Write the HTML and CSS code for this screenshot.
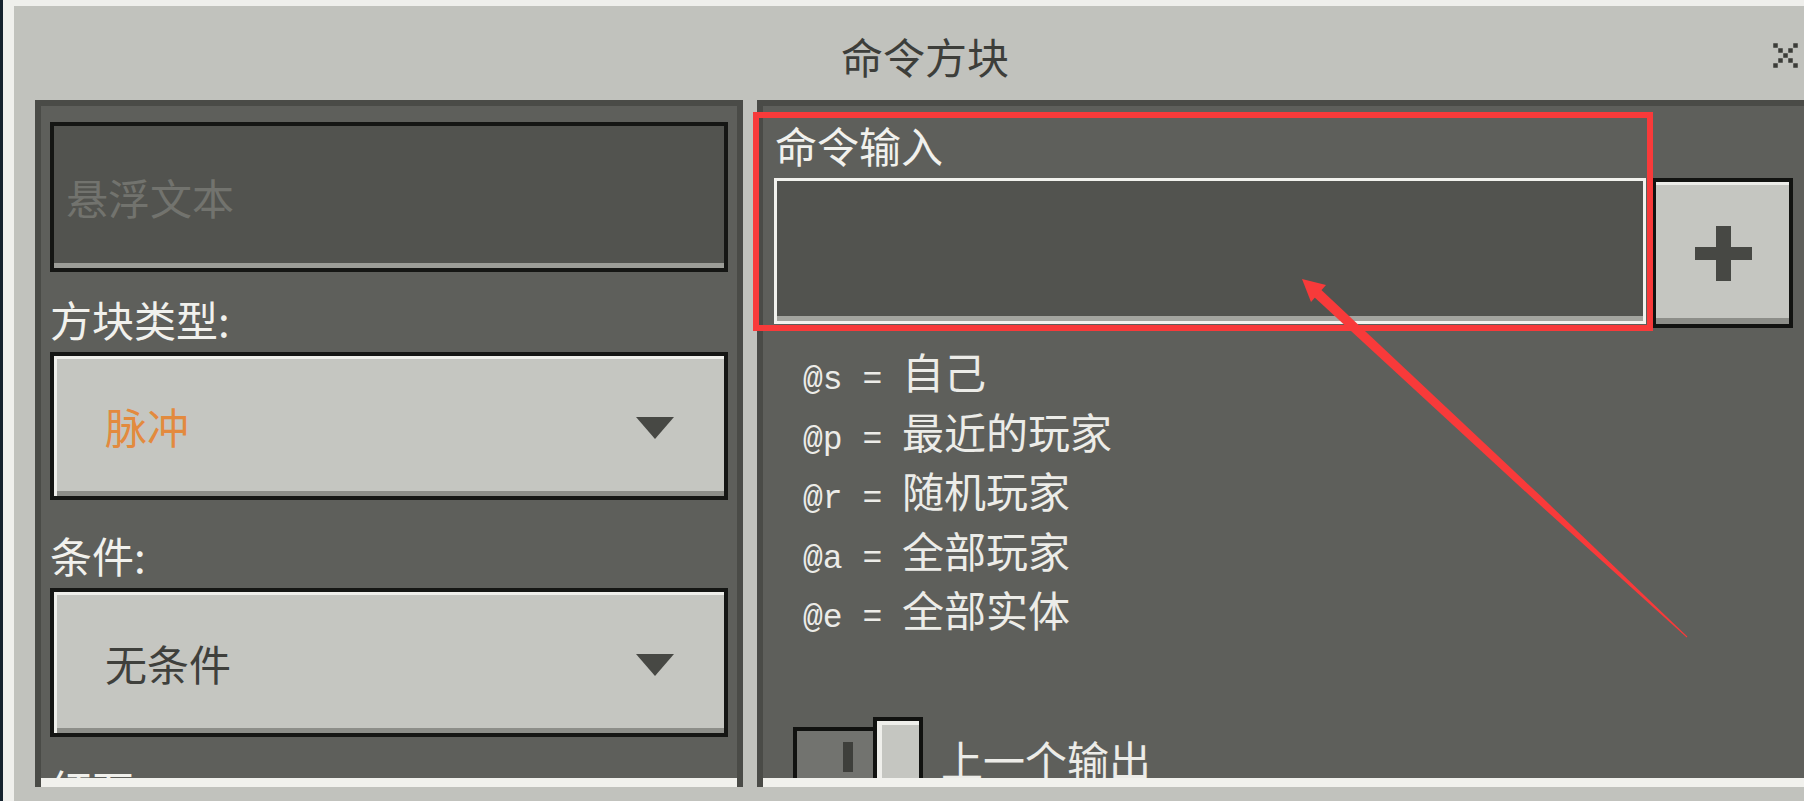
FILE: index.html
```html
<!DOCTYPE html>
<html lang="zh-CN">
<head>
<meta charset="utf-8">
<title>命令方块</title>
<link rel="stylesheet" href="styles.css">
</head>
<body>
<div class="screen">
  <div class="dialog">
    <header class="titlebar">
      <h1 class="title">命令方块</h1>
      <button class="close" aria-label="关闭">
        <svg width="25" height="25" viewBox="0 0 25 25">
          <g fill="#3b3c38">
            <rect x="0.25" y="0.25" width="4.5" height="4.5"/>
            <rect x="5.25" y="5.25" width="4.5" height="4.5"/>
            <rect x="10.25" y="10.25" width="4.5" height="4.5"/>
            <rect x="15.25" y="15.25" width="4.5" height="4.5"/>
            <rect x="20.25" y="20.25" width="4.5" height="4.5"/>
            <rect x="20.25" y="0.25" width="4.5" height="4.5"/>
            <rect x="15.25" y="5.25" width="4.5" height="4.5"/>
            <rect x="5.25" y="15.25" width="4.5" height="4.5"/>
            <rect x="0.25" y="20.25" width="4.5" height="4.5"/>
          </g>
        </svg>
      </button>
    </header>
    <div class="panels">
      <section class="panel panel-left">
        <div class="panel-body">
          <div class="field field-hover"><span class="placeholder">悬浮文本</span></div>
          <div class="label">方块类型:</div>
          <div class="dropdown"><span class="dd-text dd-orange">脉冲</span><span class="caret"></span></div>
          <div class="label">条件:</div>
          <div class="dropdown dropdown-tall"><span class="dd-text">无条件</span><span class="caret"></span></div>
          <div class="label">红石:</div>
        </div>
      </section>
      <section class="panel panel-right">
        <div class="panel-body">
          <div class="label label-cmd">命令输入</div>
          <div class="cmd-row">
            <div class="field field-cmd"></div>
            <button class="plus" aria-label="添加">
              <svg width="57" height="55" viewBox="0 0 57 55">
                <g fill="#474844">
                  <rect x="0" y="21" width="57" height="13"/>
                  <rect x="21" y="0" width="15" height="55"/>
                </g>
              </svg>
            </button>
          </div>
          <ul class="selectors">
            <li><span class="sel">@s = </span>自己</li>
            <li><span class="sel">@p = </span>最近的玩家</li>
            <li><span class="sel">@r = </span>随机玩家</li>
            <li><span class="sel">@a = </span>全部玩家</li>
            <li><span class="sel">@e = </span>全部实体</li>
          </ul>
          <div class="toggle-row">
            <div class="track"><span class="track-mark"></span></div>
            <div class="knob"></div>
            <span class="toggle-label">上一个输出</span>
          </div>
        </div>
      </section>
    </div>
  </div>
  <div class="annot-box"></div>
  <svg class="annot-arrow" width="1804" height="801" viewBox="0 0 1804 801">
    <polygon fill="#f83a3a" points="1317.4,286.3 1540.2,495.6 1687.3,636.6 1686.7,637.4 1535.4,500.8 1310.6,293.7"/>
    <polygon fill="#f83a3a" points="1302,279 1326,285 1311,302"/>
  </svg>
</div>
</body>
</html>
```

FILE: styles.css
```css
* {
  box-sizing: border-box;
  margin: 0;
  padding: 0;
}

html,
body {
  width: 1804px;
  height: 801px;
  overflow: hidden;
  background: #f2f2ef;
}

body {
  font-family: "Noto Sans CJK SC", "Noto Sans", sans-serif;
}

.screen {
  position: relative;
  width: 1804px;
  height: 801px;
  padding-left: 3px;
  overflow: hidden;
  background: linear-gradient(to right, #15222e 0, #15222e 3px, #efefec 3px);
}

.dialog {
  margin: 6px 0 0 11px;
  width: 1822px;
  height: 795px;
  background: #c1c2bd;
  display: flex;
  flex-direction: column;
}

/* title bar */
.titlebar {
  height: 94px;
  padding-top: 5px;
  display: grid;
  grid-template-columns: 1fr auto 1fr;
  align-items: center;
  flex-shrink: 0;
}

.title {
  grid-column: 2;
  font-size: 42px;
  font-weight: 400;
  line-height: 50px;
  color: #3d3e3a;
}

.close {
  grid-column: 3;
  justify-self: end;
  margin-right: 38px;
  width: 25px;
  height: 25px;
  border: 0;
  background: none;
  display: flex;
}

/* panels */
.panels {
  display: flex;
  gap: 14px;
  padding-left: 21px;
  height: 687px;
  flex-shrink: 0;
}

.panel {
  border: 6px solid #4a4b47;
  border-bottom: 0;
  background: #5e5f5b;
  display: flex;
  flex-direction: column;
}

.panel-left {
  width: 708px;
  flex-shrink: 0;
}

.panel-right {
  flex: 1;
}

.panel-body {
  flex: 1;
  min-height: 0;
  border-bottom: 9px solid #f1f1ed;
  overflow: hidden;
}

.panel-left .panel-body {
  padding: 16px 9px 0;
}

.panel-right .panel-body {
  padding: 14px 0 0 11px;
}

.label {
  font-size: 42px;
  line-height: 50px;
  color: #f1f1ed;
  white-space: nowrap;
  margin: 30px 0 8px;
}

.field-hover + .label {
  margin-top: 22px;
}

.dropdown-tall + .label {
  margin-top: 26px;
}

.label-cmd {
  margin: 0 0 8px;
  padding-left: 1px;
}

/* text fields */
.field {
  background: #52534f;
}

.field-hover {
  height: 150px;
  border: 4px solid #151614;
  box-shadow: inset 0 -5px 0 #9c9d98;
  display: flex;
  align-items: center;
  padding-left: 12px;
}

.placeholder {
  font-size: 42px;
  line-height: 50px;
  color: #72736e;
}

.field-cmd {
  width: 872px;
  height: 146px;
  border: 3px solid #f2f2ee;
  box-shadow: inset 0 -5px 0 #a3a49f;
  flex-shrink: 0;
}

/* dropdowns */
.dropdown {
  height: 148px;
  border: 4px solid #151614;
  background: #c5c6c1;
  box-shadow: inset 3px 3px 0 #efefeb, inset 0 -5px 0 #8d8e89;
  display: flex;
  align-items: center;
  justify-content: space-between;
  padding: 0 50px 0 51px;
}

.dropdown-tall {
  height: 149px;
}

.dd-text {
  font-size: 42px;
  line-height: 50px;
  color: #3f403c;
}

.dd-orange {
  color: #e38a3e;
}

.caret {
  width: 0;
  height: 0;
  border-left: 19.5px solid transparent;
  border-right: 19.5px solid transparent;
  border-top: 22px solid #474844;
  margin-top: 4px;
}

/* command row */
.cmd-row {
  display: flex;
  gap: 6px;
  align-items: flex-start;
}

.plus {
  width: 141px;
  height: 150px;
  border: 4px solid #121311;
  background: #c5c6c1;
  box-shadow: inset 0 3px 0 #ecece8, inset 0 -6px 0 #8d8e89;
  display: flex;
  align-items: center;
  justify-content: center;
  padding-left: 2px;
}

/* selector help */
.selectors {
  list-style: none;
  margin: 13px 0 0 29px;
}

.selectors li {
  font-size: 42px;
  line-height: 59.5px;
  height: 59.5px;
  color: #ecece8;
  white-space: nowrap;
}

.sel {
  font-family: "Liberation Mono", "DejaVu Sans Mono", monospace;
  font-size: 33px;
  line-height: 1;
  white-space: pre;
}

/* toggle */
.toggle-row {
  display: flex;
  align-items: flex-start;
  margin: 78px 0 0 19px;
}

.track {
  width: 84px;
  height: 55px;
  margin-top: 10px;
  border: 4px solid #111210;
  background: #72736f;
  padding: 11px 0 0 46px;
  flex-shrink: 0;
}

.track-mark {
  display: block;
  width: 10px;
  height: 30px;
  background: #3e3f3b;
}

.knob {
  width: 50px;
  height: 65px;
  margin-left: -4px;
  border: 4px solid #111210;
  background: #c5c6c1;
  box-shadow: inset 5px 4px 0 #efefeb;
  flex-shrink: 0;
}

.toggle-label {
  margin: 17px 0 0 18px;
  font-size: 42px;
  line-height: 50px;
  color: #ecece8;
  white-space: nowrap;
}

/* annotation overlay */
.annot-box {
  position: absolute;
  left: 753px;
  top: 112px;
  width: 900px;
  height: 219px;
  border: 6px solid #f83a3a;
  pointer-events: none;
}

.annot-arrow {
  position: absolute;
  left: 0;
  top: 0;
  pointer-events: none;
}
```
